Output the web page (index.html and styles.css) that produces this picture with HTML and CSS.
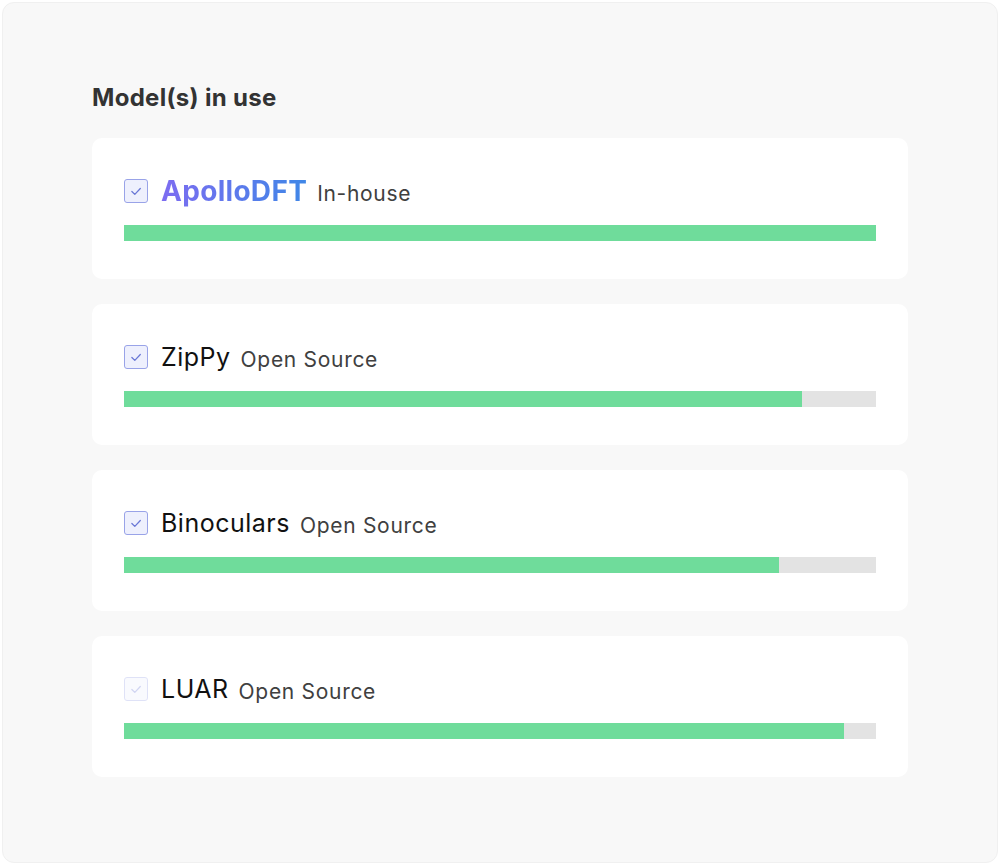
FILE: index.html
```html
<!DOCTYPE html>
<html>
<head>
<meta charset="utf-8">
<link rel="stylesheet" href="styles.css">
</head>
<body>
<div class="panel">
  <h2 class="heading">Model(s) in use</h2>
  <div class="list">
    <div class="card">
      <div class="row">
        <span class="check"><svg viewBox="0 0 24 24"><path d="M7.5 12.5l3.2 3.2 6-6.4" fill="none" stroke="#6a78d6" stroke-width="1.4" stroke-linecap="round" stroke-linejoin="round"/></svg></span>
        <span class="name brand">ApolloDFT</span>
        <span class="tag">In-house</span>
      </div>
      <div class="track"><div class="fill" style="width:100%"></div></div>
    </div>
    <div class="card">
      <div class="row">
        <span class="check"><svg viewBox="0 0 24 24"><path d="M7.5 12.5l3.2 3.2 6-6.4" fill="none" stroke="#6a78d6" stroke-width="1.4" stroke-linecap="round" stroke-linejoin="round"/></svg></span>
        <span class="name">ZipPy</span>
        <span class="tag">Open Source</span>
      </div>
      <div class="track"><div class="fill" style="width:90.2%"></div></div>
    </div>
    <div class="card">
      <div class="row">
        <span class="check"><svg viewBox="0 0 24 24"><path d="M7.5 12.5l3.2 3.2 6-6.4" fill="none" stroke="#6a78d6" stroke-width="1.4" stroke-linecap="round" stroke-linejoin="round"/></svg></span>
        <span class="name">Binoculars</span>
        <span class="tag">Open Source</span>
      </div>
      <div class="track"><div class="fill" style="width:87.1%"></div></div>
    </div>
    <div class="card">
      <div class="row">
        <span class="check faded"><svg viewBox="0 0 24 24"><path d="M7.5 12.5l3.2 3.2 6-6.4" fill="none" stroke="#6a78d6" stroke-width="1.4" stroke-linecap="round" stroke-linejoin="round"/></svg></span>
        <span class="name">LUAR</span>
        <span class="tag">Open Source</span>
      </div>
      <div class="track"><div class="fill" style="width:95.7%"></div></div>
    </div>
  </div>
</div>
</body>
</html>
```
FILE: styles.css
```css
html, body {
  margin: 0;
  padding: 0;
  background: #ffffff;
}
body {
  font-family: "Inter", "Noto Sans", sans-serif;
  padding: 2px;
  width: 1000px;
  height: 865px;
  box-sizing: border-box;
}
.panel {
  box-sizing: border-box;
  height: 861px;
  width: 996px;
  background: #f8f8f8;
  border: 1px solid #f0f0f0;
  border-radius: 12px;
  padding: 80px 89px 0 89px;
}
.heading {
  margin: 0;
  font-size: 24px;
  font-weight: 700;
  color: #333333;
  letter-spacing: 0.3px;
  line-height: 30px;
}
.list {
  margin-top: 25px;
  display: flex;
  flex-direction: column;
  gap: 25px;
}
.card {
  background: #ffffff;
  border-radius: 10px;
  height: 141px;
  box-sizing: border-box;
  padding: 37px 32px 0 32px;
}
.row {
  display: flex;
  align-items: center;
  height: 32px;
}
.check {
  width: 22px;
  height: 22px;
  border: 1px solid #99a3e8;
  background: #eef0fd;
  border-radius: 3px;
  display: flex;
  align-items: center;
  justify-content: center;
  flex: none;
  margin-right: 13px;
}
.check svg {
  width: 22px;
  height: 22px;
}
.check.faded {
  opacity: 0.3;
}
.name {
  font-size: 25px;
  color: #111111;
  font-weight: 400;
  letter-spacing: 0.5px;
  margin-right: 10px;
}
.brand {
  font-size: 28px;
  font-weight: 700;
  background: linear-gradient(90deg, #7d6cf1 0%, #3f87e7 100%);
  -webkit-background-clip: text;
  background-clip: text;
  color: transparent;
  margin-right: 10px;
  letter-spacing: 0.3px;
}
.tag {
  font-size: 21px;
  color: #404040;
  padding-top: 4px;
  letter-spacing: 0.7px;
}
.track {
  margin-top: 18px;
  height: 16px;
  background: #e3e3e3;
}
.fill {
  height: 100%;
  background: #6fdc9b;
}
```
